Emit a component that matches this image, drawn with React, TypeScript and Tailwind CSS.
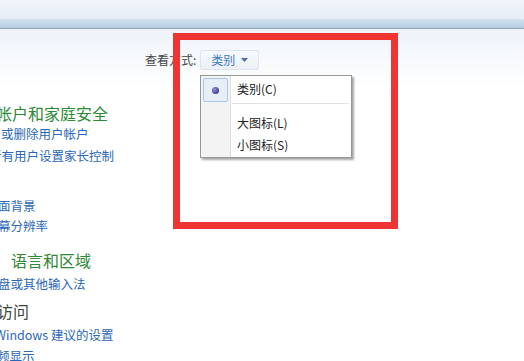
import React from "react";

const font = { fontFamily: '"Noto Sans CJK SC", "Noto Sans", sans-serif' };

function Heading({ text, shift, className }: { text: string; shift: string; className?: string }) {
  return (
    <div className={`whitespace-nowrap text-[16px] leading-[20px] ${shift} ${className ?? "text-[#2f8a35]"}`}>
      {text}
    </div>
  );
}

function Link({ text, shift }: { text: string; shift: string }) {
  return (
    <div className={`whitespace-nowrap text-[12.5px] leading-[20px] text-[#2a67b8] ${shift}`}>{text}</div>
  );
}

export default function App() {
  return (
    <div className="relative w-[524px] h-[361px] overflow-hidden bg-white" style={font}>
      {/* window top */}
      <div className="h-[19px] bg-gradient-to-b from-[#f1f5fa] to-[#e6edf5]" />
      <div className="h-[9px] bg-gradient-to-b from-[#d3e1f0] to-[#b5cbe3]" />
      <div className="h-px bg-[#97a6b6]" />

      <div className="bg-gradient-to-b from-[#eef3fa] to-white h-[60px] absolute left-0 right-0 top-[29px]" />

      <div className="relative flex flex-col">
        {/* view by */}
        <div className="flex items-center h-[20px] mt-[21px] pl-[145px]">
          <span className="text-[12px] text-[#444]">查看方式:</span>
          <div className="ml-[4px] flex items-center gap-[6px] h-[20px] px-[10px] border border-[#dde6f0] bg-gradient-to-b from-[#f7fafd] to-[#eaf0f7] rounded-[2px]">
            <span className="text-[12px] text-[#3d78c2]">类别</span>
            <svg width="7" height="4" viewBox="0 0 7 4">
              <path d="M0 0h7L3.5 4z" fill="#4a6f9a" />
            </svg>
          </div>
        </div>

        {/* categories */}
        <div className="flex flex-col overflow-hidden w-[200px] mt-[33px]">
          <Heading text="帐户和家庭安全" shift="ml-[-4px]" />
          <Link text="或删除用户帐户" shift="ml-[1px] mt-[1px]" />
          <Link text="所有用户设置家长控制" shift="ml-[-11px] mt-[2px]" />
          <div className="h-[30px]" />
          <Link text="面背景" shift="ml-[-2px]" />
          <Link text="幕分辨率" shift="ml-[-2px]" />
          <div className="h-[14px]" />
          <Heading text="语言和区域" shift="ml-[11px]" />
          <Link text="盘或其他输入法" shift="ml-[-2px] mt-[4px]" />
          <Heading text="访问" shift="ml-[-3px] mt-[7px]" className="text-[#3b4a3b]" />
          <Link text="Windows 建议的设置" shift="ml-[-5px] mt-[4px]" />
          <Link text="频显示" shift="ml-[-3px] mt-[1px]" />
        </div>
      </div>

      {/* dropdown menu */}
      <div className="absolute left-[200px] top-[75px] w-[152px] h-[83px] bg-white border border-[#979797] shadow-[2px_2px_2px_rgba(0,0,0,0.35)] flex">
        <div className="w-[30px] bg-[#f3f3f3] border-r border-[#dcdddd]" />
        <div className="absolute left-[30px] top-0 bottom-0 w-px bg-white" />
        <div className="absolute left-[2px] top-[2px] w-[25px] h-[24px] border border-[#a8c6ea] bg-[#e6eef8] rounded-[2px] flex items-center justify-center">
          <div className="w-[7px] h-[7px] rounded-full bg-[radial-gradient(circle_at_35%_35%,#8f90d8,#24256a)]" />
        </div>
        <div className="flex flex-col flex-1 text-[12px] text-[#222] pl-[6px]">
          <div className="h-[26px] flex items-center">类别(C)</div>
          <div className="h-px bg-[#e2e3e3] ml-[-6px] mr-[2px] mt-[1px]" />
          <div className="h-[20px] flex items-center mt-[9px]">大图标(L)</div>
          <div className="h-[20px] flex items-center mt-[2px]">小图标(S)</div>
        </div>
      </div>

      {/* annotation box */}
      <div className="absolute left-[173px] top-[33px] w-[225px] h-[196px] border-[7px] border-[#ef3434]" />
    </div>
  );
}
